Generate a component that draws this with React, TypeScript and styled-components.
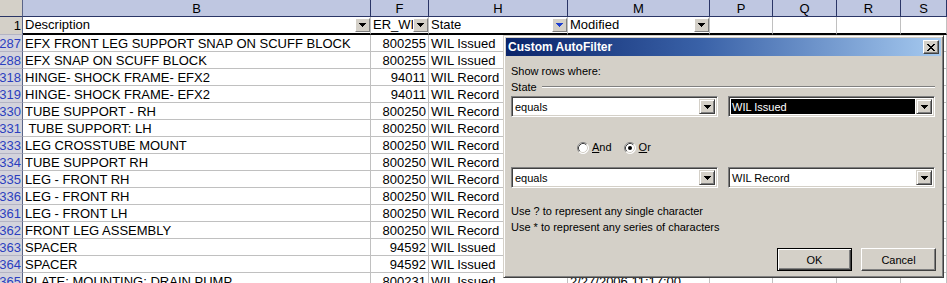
import React from 'react';
import styled, { createGlobalStyle } from 'styled-components';

const GlobalStyle = createGlobalStyle`
  html, body { margin: 0; padding: 0; background: #fff; overflow: hidden; }
  body { font-family: "Liberation Sans", Arial, sans-serif; }
`;

const Screen = styled.div`
  position: relative;
  width: 947px;
  height: 283px;
  overflow: hidden;
  background: #fff;
  font-family: "Liberation Sans", Arial, sans-serif;
  font-size: 13px;
  color: #000;
`;

const Sheet = styled.div`
  display: grid;
  grid-template-columns: 23px 348px 58px 139px 142px 63px 64px 64px 1fr;
  grid-template-rows: 17px 18px;
  grid-auto-rows: 17px;
`;

const Corner = styled.div`
  box-sizing: border-box;
  background: #d4d0c8;
  border-right: 1px solid #5a6488;
  border-bottom: 1px solid #2a3566;
`;

const ColLetter = styled.div`
  box-sizing: border-box;
  background: #bfc7e1;
  border-right: 1px solid #2a3566;
  border-bottom: 1px solid #2a3566;
  display: flex;
  align-items: center;
  justify-content: center;
  line-height: 1;
`;

const RowNum = styled.div<{ $plain?: boolean }>`
  box-sizing: border-box;
  background: ${p => (p.$plain ? '#d4d0c8' : '#d3d3dc')};
  color: ${p => (p.$plain ? '#000' : '#2b3fbf')};
  border-right: 1px solid #5a6488;
  border-bottom: 1px solid #b4b4c4;
  display: flex;
  align-items: center;
  justify-content: flex-end;
  padding-right: 1px;
  overflow: hidden;
  white-space: nowrap;
  line-height: 1;
`;

const FieldCell = styled.div`
  box-sizing: border-box;
  border-right: 1px solid #c0c0c0;
  border-bottom: 2px solid #000;
  display: flex;
  align-items: center;
  padding-left: 2px;
  overflow: hidden;
`;

const FieldLabel = styled.span`
  flex: 1;
  min-width: 0;
  overflow: hidden;
  white-space: nowrap;
  line-height: 16px;
`;

const FilterButton = styled.div<{ $active?: boolean }>`
  box-sizing: border-box;
  flex: 0 0 15px;
  height: 14px;
  background: #d4d0c8;
  border: 1px solid;
  border-color: #fff #808080 #808080 #fff;
  display: flex;
  align-items: center;
  justify-content: center;
`;

const Cell = styled.div<{ $align?: 'left' | 'right' }>`
  box-sizing: border-box;
  border-right: 1px solid #c0c0c0;
  border-bottom: 1px solid #c0c0c0;
  display: flex;
  align-items: center;
  justify-content: ${p => (p.$align === 'right' ? 'flex-end' : 'flex-start')};
  padding: 0 2px;
  white-space: pre;
  overflow: hidden;
  line-height: 1;
`;

/* ---------- Dialog ---------- */

const Dialog = styled.div`
  position: absolute;
  left: 503px;
  top: 35px;
  width: 441px;
  height: 243px;
  box-sizing: border-box;
  background: #d4d0c8;
  border: 1px solid;
  border-color: #d4d0c8 #404040 #404040 #d4d0c8;
  box-shadow: inset 1px 1px #fff, inset -1px -1px #808080;
  padding: 2px;
  display: flex;
  flex-direction: column;
  font-family: "Liberation Sans", Arial, sans-serif;
  font-size: 11px;
  color: #000;
`;

const TitleBar = styled.div`
  height: 18px;
  flex: 0 0 18px;
  background: linear-gradient(90deg, #0a246a 0%, #3a62a8 45%, #a6caf0 100%);
  color: #fff;
  display: flex;
  align-items: center;
  justify-content: space-between;
  padding: 0 2px 0 2px;
`;

const TitleText = styled.span`
  font-weight: bold;
  font-size: 12px;
  line-height: 1;
`;

const CloseButton = styled.div`
  box-sizing: border-box;
  width: 16px;
  height: 14px;
  background: #d4d0c8;
  border: 1px solid;
  border-color: #fff #404040 #404040 #fff;
  box-shadow: inset -1px -1px #808080;
  display: flex;
  align-items: center;
  justify-content: center;
`;

const Body = styled.div`
  flex: 1;
  display: flex;
  flex-direction: column;
  padding: 8px 6px 0 5px;
`;

const TextLine = styled.div`
  height: 15px;
  line-height: 15px;
  white-space: nowrap;
`;

const Legend = styled.div`
  height: 15px;
  display: flex;
  align-items: center;
`;

const Groove = styled.div`
  flex: 1;
  height: 0;
  margin-left: 5px;
  border-top: 1px solid #808080;
  border-bottom: 1px solid #fff;
`;

const ConditionRow = styled.div<{ $top: number }>`
  display: flex;
  gap: 10px;
  margin-top: ${p => p.$top}px;
`;

const Combo = styled.div`
  box-sizing: border-box;
  width: 207px;
  height: 21px;
  background: #fff;
  border: 1px solid;
  border-color: #808080 #fff #fff #808080;
  box-shadow: inset 1px 1px #404040, inset -1px -1px #d4d0c8;
  padding: 2px;
  display: flex;
  align-items: stretch;
`;

const ComboText = styled.div<{ $selected?: boolean }>`
  flex: 1;
  display: flex;
  align-items: center;
  padding-left: 1px;
  margin-right: 1px;
  background: ${p => (p.$selected ? '#000' : 'transparent')};
  color: ${p => (p.$selected ? '#fff' : '#000')};
  white-space: nowrap;
  overflow: hidden;
`;

const DropButton = styled.div`
  box-sizing: border-box;
  width: 16px;
  background: #d4d0c8;
  border: 1px solid;
  border-color: #d4d0c8 #404040 #404040 #d4d0c8;
  box-shadow: inset 1px 1px #fff, inset -1px -1px #808080;
  display: flex;
  align-items: center;
  justify-content: center;
`;

const RadioRow = styled.div`
  margin-top: 24px;
  height: 13px;
  padding-left: 66px;
  display: flex;
  align-items: center;
  gap: 12px;
`;

const RadioItem = styled.label`
  display: flex;
  align-items: center;
  gap: 3px;
  line-height: 1;
`;

const Accel = styled.span`
  text-decoration: underline;
`;

const Hints = styled.div`
  margin-top: 15px;
  line-height: 16px;
  white-space: nowrap;
`;

const ButtonRow = styled.div`
  margin-top: 13px;
  margin-right: -1px;
  display: flex;
  justify-content: flex-end;
  gap: 9px;
`;

const PushButton = styled.div<{ $default?: boolean }>`
  box-sizing: border-box;
  width: 75px;
  height: 23px;
  display: flex;
  align-items: center;
  justify-content: center;
  background: #d4d0c8;
  border: 1px solid;
  border-color: ${p => (p.$default ? '#000' : '#fff #404040 #404040 #fff')};
  box-shadow: ${p =>
    p.$default
      ? 'inset 1px 1px #fff, inset -1px -1px #404040, inset -2px -2px #808080'
      : 'inset -1px -1px #808080'};
`;

/* ---------- Icons ---------- */

const Arrow = ({ color = '#000' }: { color?: string }) => (
  <svg width="7" height="4" viewBox="0 0 7 4" shapeRendering="crispEdges">
    <path d="M0 0h7v1H0z M1 1h5v1H1z M2 2h3v1H2z M3 3h1v1H3z" fill={color} />
  </svg>
);

const CloseGlyph = () => (
  <svg width="8" height="7" viewBox="0 0 8 7" shapeRendering="crispEdges">
    <path
      d="M0 0h2v1H0z M6 0h2v1H6z M1 1h2v1H1z M5 1h2v1H5z M2 2h4v1H2z M3 3h2v1H3z M2 4h4v1H2z M1 5h2v1H1z M5 5h2v1H5z M0 6h2v1H0z M6 6h2v1H6z"
      fill="#000"
    />
  </svg>
);

const Radio = ({ checked }: { checked?: boolean }) => (
  <svg width="12" height="12" viewBox="0 0 12 12">
    <circle cx="6" cy="6" r="5.5" fill="#fff" />
    <path d="M2.11 9.89 A5.5 5.5 0 0 1 9.89 2.11" fill="none" stroke="#808080" strokeWidth="1" />
    <path d="M9.89 2.11 A5.5 5.5 0 0 1 2.11 9.89" fill="none" stroke="#fff" strokeWidth="1" />
    <path d="M2.82 9.18 A4.5 4.5 0 0 1 9.18 2.82" fill="none" stroke="#404040" strokeWidth="1" />
    <path d="M9.18 2.82 A4.5 4.5 0 0 1 2.82 9.18" fill="none" stroke="#d4d0c8" strokeWidth="1" />
    {checked && <circle cx="6" cy="6" r="2" fill="#000" />}
  </svg>
);

/* ---------- Data ---------- */

type Row = { n: string; desc: string; id: string; state: string; mod?: string };

const rows: Row[] = [
  { n: '287', desc: 'EFX FRONT LEG SUPPORT SNAP ON SCUFF BLOCK', id: '800255', state: 'WIL Issued' },
  { n: '288', desc: 'EFX SNAP ON SCUFF BLOCK', id: '800255', state: 'WIL Issued' },
  { n: '318', desc: 'HINGE- SHOCK FRAME- EFX2', id: '94011', state: 'WIL Record' },
  { n: '319', desc: 'HINGE- SHOCK FRAME- EFX2', id: '94011', state: 'WIL Record' },
  { n: '330', desc: 'TUBE SUPPORT - RH', id: '800250', state: 'WIL Record' },
  { n: '331', desc: ' TUBE SUPPORT: LH', id: '800250', state: 'WIL Record' },
  { n: '333', desc: 'LEG CROSSTUBE MOUNT', id: '800250', state: 'WIL Record' },
  { n: '334', desc: 'TUBE SUPPORT RH', id: '800250', state: 'WIL Record' },
  { n: '335', desc: 'LEG - FRONT RH', id: '800250', state: 'WIL Record' },
  { n: '336', desc: 'LEG - FRONT RH', id: '800250', state: 'WIL Record' },
  { n: '361', desc: 'LEG - FRONT LH', id: '800250', state: 'WIL Record' },
  { n: '362', desc: 'FRONT LEG ASSEMBLY', id: '800250', state: 'WIL Record' },
  { n: '363', desc: 'SPACER', id: '94592', state: 'WIL Issued' },
  { n: '364', desc: 'SPACER', id: '94592', state: 'WIL Issued' },
  { n: '365', desc: 'PLATE: MOUNTING: DRAIN PUMP', id: '800231', state: 'WIL Issued', mod: '2/27/2006 11:17:00' },
];

const letters = ['B', 'F', 'H', 'M', 'P', 'Q', 'R', 'S'];

const fields: { label: string; filter: boolean; active?: boolean }[] = [
  { label: 'Description', filter: true },
  { label: 'ER_WI', filter: true },
  { label: 'State', filter: true, active: true },
  { label: 'Modified', filter: true },
  { label: '', filter: false },
  { label: '', filter: false },
  { label: '', filter: false },
  { label: '', filter: false },
];

export default function App() {
  return (
    <>
      <GlobalStyle />
      <Screen>
        <Sheet>
          <Corner />
          {letters.map(l => (
            <ColLetter key={l}>{l}</ColLetter>
          ))}

          <RowNum $plain>1</RowNum>
          {fields.map((f, i) => (
            <FieldCell key={i}>
              <FieldLabel>{f.label}</FieldLabel>
              {f.filter && (
                <FilterButton $active={f.active}>
                  <Arrow color={f.active ? '#1f3fd0' : '#000'} />
                </FilterButton>
              )}
            </FieldCell>
          ))}

          {rows.map(r => (
            <React.Fragment key={r.n}>
              <RowNum>{r.n}</RowNum>
              <Cell>{r.desc}</Cell>
              <Cell $align="right">{r.id}</Cell>
              <Cell>{r.state}</Cell>
              <Cell>{r.mod ?? ''}</Cell>
              <Cell />
              <Cell />
              <Cell />
              <Cell />
            </React.Fragment>
          ))}
        </Sheet>

        <Dialog>
          <TitleBar>
            <TitleText>Custom AutoFilter</TitleText>
            <CloseButton>
              <CloseGlyph />
            </CloseButton>
          </TitleBar>
          <Body>
            <TextLine>Show rows where:</TextLine>
            <Legend>
              <span>State</span>
              <Groove />
            </Legend>
            <ConditionRow $top={2}>
              <Combo>
                <ComboText>equals</ComboText>
                <DropButton>
                  <Arrow />
                </DropButton>
              </Combo>
              <Combo>
                <ComboText $selected>WIL Issued</ComboText>
                <DropButton>
                  <Arrow />
                </DropButton>
              </Combo>
            </ConditionRow>
            <RadioRow>
              <RadioItem>
                <Radio />
                <span>
                  <Accel>A</Accel>nd
                </span>
              </RadioItem>
              <RadioItem>
                <Radio checked />
                <span>
                  <Accel>O</Accel>r
                </span>
              </RadioItem>
            </RadioRow>
            <ConditionRow $top={13}>
              <Combo>
                <ComboText>equals</ComboText>
                <DropButton>
                  <Arrow />
                </DropButton>
              </Combo>
              <Combo>
                <ComboText>WIL Record</ComboText>
                <DropButton>
                  <Arrow />
                </DropButton>
              </Combo>
            </ConditionRow>
            <Hints>
              <div>Use ? to represent any single character</div>
              <div>Use * to represent any series of characters</div>
            </Hints>
            <ButtonRow>
              <PushButton $default>OK</PushButton>
              <PushButton>Cancel</PushButton>
            </ButtonRow>
          </Body>
        </Dialog>
      </Screen>
    </>
  );
}
